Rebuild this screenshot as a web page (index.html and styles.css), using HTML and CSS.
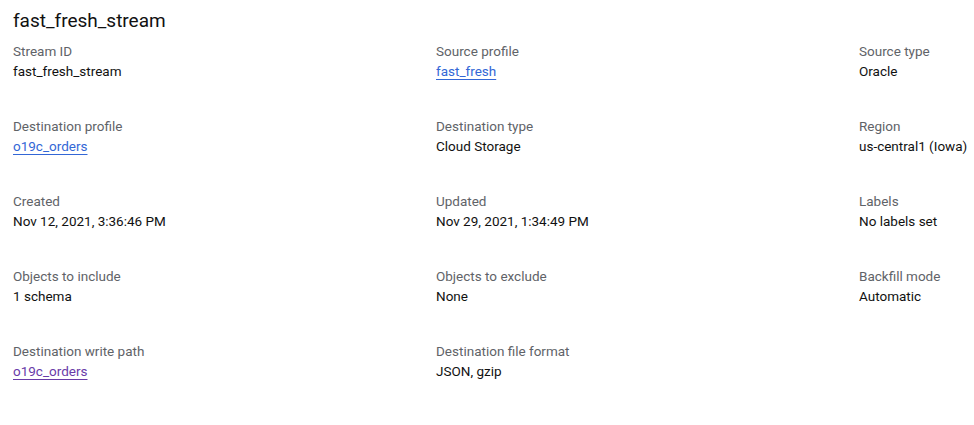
FILE: index.html
```html
<!DOCTYPE html>
<html lang="en">
<head>
<meta charset="utf-8">
<title>fast_fresh_stream</title>
<link rel="stylesheet" href="styles.css">
</head>
<body>
<main class="page">
  <h1 class="title">fast_fresh_stream</h1>
  <div class="grid">
    <div class="field"><div class="label">Stream ID</div><div class="value">fast_fresh_stream</div></div>
    <div class="field"><div class="label">Source profile</div><div class="value"><a class="link" href="#">fast_fresh</a></div></div>
    <div class="field"><div class="label">Source type</div><div class="value">Oracle</div></div>

    <div class="field"><div class="label">Destination profile</div><div class="value"><a class="link" href="#">o19c_orders</a></div></div>
    <div class="field"><div class="label">Destination type</div><div class="value">Cloud Storage</div></div>
    <div class="field"><div class="label">Region</div><div class="value">us-central1 (Iowa)</div></div>

    <div class="field"><div class="label">Created</div><div class="value">Nov 12, 2021, 3:36:46 PM</div></div>
    <div class="field"><div class="label">Updated</div><div class="value">Nov 29, 2021, 1:34:49 PM</div></div>
    <div class="field"><div class="label">Labels</div><div class="value">No labels set</div></div>

    <div class="field"><div class="label">Objects to include</div><div class="value">1 schema</div></div>
    <div class="field"><div class="label">Objects to exclude</div><div class="value">None</div></div>
    <div class="field"><div class="label">Backfill mode</div><div class="value">Automatic</div></div>

    <div class="field"><div class="label">Destination write path</div><div class="value"><a class="link visited" href="#">o19c_orders</a></div></div>
    <div class="field"><div class="label">Destination file format</div><div class="value">JSON, gzip</div></div>
  </div>
</main>
</body>
</html>
```
FILE: styles.css
```css
html, body {
  margin: 0;
  padding: 0;
  background: #ffffff;
}
body {
  font-family: Roboto, "Liberation Sans", Arial, sans-serif;
  color: #202124;
  overflow: hidden;
}
.page {
  padding: 9px 13px 0 13px;
}
.title {
  margin: 0;
  font-size: 19px;
  line-height: 24px;
  font-weight: 400;
  color: #111111;
}
.grid {
  margin-top: 7.6px;
  display: grid;
  grid-template-columns: 423px 423px 1fr;
  row-gap: 35px;
}
.field {
  font-size: 13.5px;
  line-height: 20px;
  white-space: nowrap;
}
.label {
  color: #5f6368;
}
.value {
  color: #111111;
}
.link {
  color: #3367d6;
  text-decoration: underline;
  text-underline-offset: 3px;
}
.link.visited {
  color: #6a3ba8;
}
```
